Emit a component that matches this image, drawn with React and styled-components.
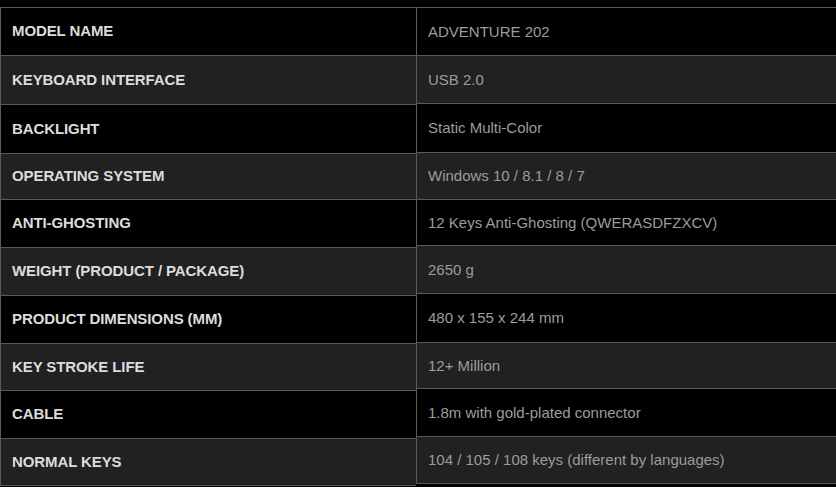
import styled, { createGlobalStyle } from 'styled-components';

const GlobalStyle = createGlobalStyle`
  html, body {
    margin: 0;
    padding: 0;
    background: #000;
  }
  body {
    font-family: "Liberation Sans", Arial, sans-serif;
  }
`

const Specs = styled.div`
  display: flex;
  padding-top: 7px;
  background: #000;
`

const Column = styled.div`
  display: flex;
  flex-direction: column;
  width: ${({ $width }) => $width || 'auto'};
  flex: ${({ $grow }) => ($grow ? 1 : 'none')};
  border-bottom: 1px solid #5a5a5a;
  align-self: flex-start;
`

const Row = styled.div`
  display: flex;
  align-items: center;
  box-sizing: border-box;
  height: ${({ $h }) => $h}px;
  border-top: 1px solid #5a5a5a;
  border-left: 1px solid #5a5a5a;
  padding-left: 11px;
  padding-bottom: ${({ $lift }) => $lift || 0}px;
  background: ${({ $alt }) => ($alt ? '#212121' : '#000')};
`

const Label = styled.span`
  font-size: 15px;
  font-weight: 700;
  letter-spacing: -0.1px;
  color: #dcdcdc;
`

const Value = styled.span`
  font-size: 15px;
  color: #9c9c9c;
`

const specs = [
  ['MODEL NAME', 'ADVENTURE 202'],
  ['KEYBOARD INTERFACE', 'USB 2.0'],
  ['BACKLIGHT', 'Static Multi-Color'],
  ['OPERATING SYSTEM', 'Windows 10 / 8.1 / 8 / 7'],
  ['ANTI-GHOSTING', '12 Keys Anti-Ghosting (QWERASDFZXCV)'],
  ['WEIGHT (PRODUCT / PACKAGE)', '2650 g'],
  ['PRODUCT DIMENSIONS (MM)', '480 x 155 x 244 mm'],
  ['KEY STROKE LIFE', '12+ Million'],
  ['CABLE', '1.8m with gold-plated connector'],
  ['NORMAL KEYS', '104 / 105 / 108 keys (different by languages)'],
]

const labelHeights = [48, 49, 49, 46, 48, 48, 48, 47, 48, 47]
const valueHeights = [48, 48, 49, 47, 46, 48, 49, 46, 48, 47]

export default function App() {
  return (
    <>
      <GlobalStyle />
      <Specs>
        <Column $width="416px">
          {specs.map(([label], i) => (
            <Row key={label} $h={labelHeights[i]} $alt={i % 2 === 1} $lift={2}>
              <Label>{label}</Label>
            </Row>
          ))}
        </Column>
        <Column $grow>
          {specs.map(([label, value], i) => (
            <Row key={label} $h={valueHeights[i]} $alt={i % 2 === 1} $lift={1}>
              <Value>{value}</Value>
            </Row>
          ))}
        </Column>
      </Specs>
    </>
  )
}
